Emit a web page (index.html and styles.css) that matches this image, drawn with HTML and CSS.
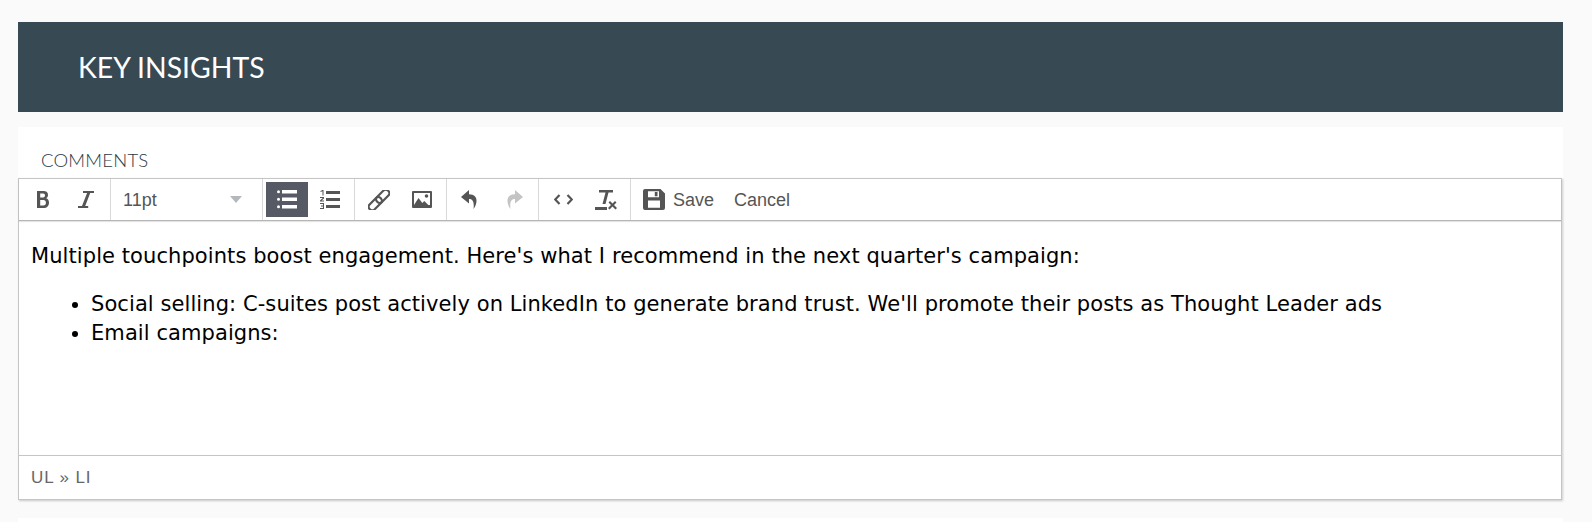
FILE: index.html
```html
<!DOCTYPE html>
<html lang="en">
<head>
<meta charset="utf-8">
<title>Key Insights</title>
<link rel="stylesheet" href="styles.css">
</head>
<body>
<header class="banner"><h1>KEY INSIGHTS</h1></header>
<section class="card">
  <div class="label">COMMENTS</div>
  <div class="editor">
    <div class="toolbar">
      <div class="group group-format">
        <button class="btn"><svg width="12" height="17" viewBox="0 0 12 17"><path fill-rule="evenodd" d="M0 0h6.500C9.500 0 11 1.500 11 4c0 1.500-.7 2.700-1.900 3.300C10.900 7.900 12 9.300 12 11.500 12 15 10 17 6.500 17H0zM3.200 2.600v3.800h3C7.300 6.400 8 5.600 8 4.500S7.300 2.600 6.200 2.600zM3.200 9v5.400h3.200c1.600 0 2.500-1 2.500-2.700S8 9 6.400 9z"/></svg></button>
        <button class="btn"><svg width="16" height="17" viewBox="0 0 16 17"><path d="M5 0h11v2h-3.800L7.200 15h3V17H0v-2h4L9.100 2H5z"/></svg></button>
      </div>
      <div class="group group-size">
        <div class="select"><span>11pt</span><i class="caret"></i></div>
      </div>
      <div class="group group-list">
        <button class="btn active"><svg width="20" height="19" viewBox="0 0 20 19"><path d="M5 0h15v3.500H5zM5 7.500h15V11H5zM5 15h15v3.500H5z"/><circle cx="1.500" cy="1.800" r="1.500"/><circle cx="1.500" cy="9.300" r="1.500"/><circle cx="1.500" cy="16.800" r="1.500"/></svg></button>
        <button class="btn"><svg width="20" height="19" viewBox="0 0 20 19"><path d="M6 1h14v3H6zM6 8h14v3H6zM6 15h14v3H6z"/><path d="M.5 1 2.500 0h1v5.500h-1V1.300L.5 2zM0 7h4v1.500L1.600 10.500H4v1H0v-1l2.800-2.500H0zM0 13h4v6H0v-1h3v-1.500H1v-1h2V14H0z"/></svg></button>
      </div>
      <div class="group group-insert">
        <button class="btn"><svg class="stroke" width="22" height="20" viewBox="0 0 22 20"><g transform="translate(11 10) rotate(-45)"><rect x="-13" y="-3.500" width="15.500" height="7" rx="3.200"/><rect x="-2.500" y="-3.500" width="15.500" height="7" rx="3.200"/></g></svg></button>
        <button class="btn"><svg width="20" height="17" viewBox="0 0 20 17"><path fill-rule="evenodd" d="M1 0h18a1 1 0 0 1 1 1v15a1 1 0 0 1-1 1H1a1 1 0 0 1-1-1V1a1 1 0 0 1 1-1zM2 2v12l4.500-7 3.800 5 2-2 4 4H18V2zM14.500 3.200a1.800 1.800 0 1 1 0 3.600 1.800 1.800 0 0 1 0-3.600z"/></svg></button>
      </div>
      <div class="group group-history">
        <button class="btn btn-undo"><svg width="17" height="19" viewBox="0 0 17 19"><path d="M8 0 0 7l8 6.500V9c3.500 0 5.500 2.500 4.500 10C16 15 18.500 4.300 8 4.300z"/></svg></button>
        <button class="btn disabled"><svg width="17" height="19" viewBox="0 0 17 19"><path d="M9 0l8 7-8 6.500V9c-3.500 0-5.500 2.500-4.500 10C1 15-1.500 4.300 9 4.300z"/></svg></button>
      </div>
      <div class="group group-code">
        <button class="btn"><svg class="stroke" width="19" height="11" viewBox="0 0 19 11"><path d="M5.500 1 1.200 5.500 5.500 10M13.500 1l4.300 4.500L13.500 10"/></svg></button>
        <button class="btn"><svg width="22" height="20" viewBox="0 0 22 20"><path d="M4 0h14v2.500h-4.500L10.500 14H7.500L10.500 2.500H4zM0 17h12v3H0zM13.500 12.500l1.500-1.500 2.500 2.500L20 11l1.500 1.500-2.500 2.500 3 3-1.500 1.500-3-3-3 3-1.500-1.500 3-3z"/></svg></button>
      </div>
      <div class="group group-actions">
        <button class="btn btn-text"><svg width="22" height="21" viewBox="0 0 22 21"><path fill-rule="evenodd" d="M2 0h15.500L22 4.500V19a2 2 0 0 1-2 2H2a2 2 0 0 1-2-2V2a2 2 0 0 1 2-2zM5 2.200v6h11v-6zM11.800 3h2.700v4.300h-2.700zM5 11.500v7.200h12v-7.200z"/></svg><span>Save</span></button>
        <button class="btn btn-text btn-cancel"><span>Cancel</span></button>
      </div>
    </div>
    <div class="content">
      <p>Multiple touchpoints boost engagement. Here's what I recommend in the next quarter's campaign:</p>
      <ul>
        <li>Social selling: C-suites post actively on LinkedIn to generate brand trust. We'll promote their posts as Thought Leader ads</li>
        <li>Email campaigns:</li>
      </ul>
    </div>
    <div class="statusbar">UL » LI</div>
  </div>
</section>
<div class="next"></div>
</body>
</html>
```
FILE: styles.css
```css
* { box-sizing: border-box; }
html, body { margin: 0; height: 522px; overflow: hidden; }
body { background: #fafafa; padding: 22px 29px 0 18px; }
.banner { height: 90px; background: #374953; display: flex; align-items: center; padding-left: 60px; }
.banner h1 { margin: 0; font: 400 28.400px/1 Lato, sans-serif; color: #fff; }
.card { background: #fff; margin-top: 15px; height: 373px; }
.label { height: 51px; padding: 23px 0 0 23px; font: 300 18.500px/20px Lato, sans-serif; letter-spacing: .2px; color: #2b3a44; }
.editor { margin-right: 1px; height: 322px; border: 1px solid #c5c5c5; box-shadow: 1px 1px 2px rgba(0,0,0,.2); display: flex; flex-direction: column; }
.toolbar { height: 42px; flex: none; display: flex; border-bottom: 1px solid #b5b5b5; box-shadow: 0 1px 1px rgba(0,0,0,.1); }
.group { display: flex; align-items: center; border-right: 1px solid #d9d9d9; padding: 0 3px; gap: 1px; }
.group-format { width: 92px; }
.group-size { width: 152px; padding: 0 0 0 12px; }
.group-list { width: 92px; }
.group-insert { width: 92px; }
.group-history { width: 92px; }
.group-code { width: 92px; }
.group-actions { border-right: 0; padding: 0 3px; gap: 0; }
.btn { width: 42px; height: 35px; padding: 0; border: 0; background: none; display: flex; align-items: center; justify-content: center; color: #555; font: 400 18px/1 "Liberation Sans", Arial, sans-serif; }
.btn svg { fill: currentColor; }
.btn svg.stroke { fill: none; stroke: currentColor; stroke-width: 2.200; }
.btn.active { background: #555a64; color: #fff; }
.btn.disabled { color: #c4c4c4; }
.btn-undo svg { margin-right: 3px; }
.btn-text { width: auto; padding-left: 9px; gap: 8px; }
.btn-cancel { padding-left: 20px; }
.select { flex: 1; display: flex; align-items: center; justify-content: space-between; padding-right: 20px; font: 400 18px/1 "Liberation Sans", Arial, sans-serif; color: #555; }
.caret { width: 0; height: 0; border: 6px solid transparent; border-top: 7px solid #b4b8bd; border-bottom: 0; }
.content { flex: 1; padding: 0 12px; font: 400 21px/29px "DejaVu Sans", Verdana, sans-serif; letter-spacing: .08px; color: #000; }
.content p { margin: 21px 0 0; }
.content ul { margin: 19px 0 0; padding-left: 60px; }
.statusbar { height: 44px; flex: none; border-top: 1px solid #c5c5c5; padding-left: 12px; font: 400 17px/43px "Liberation Sans", Arial, sans-serif; color: #666; letter-spacing: .9px; }
.next { background: #fff; height: 20px; margin-top: 18px; }
```
